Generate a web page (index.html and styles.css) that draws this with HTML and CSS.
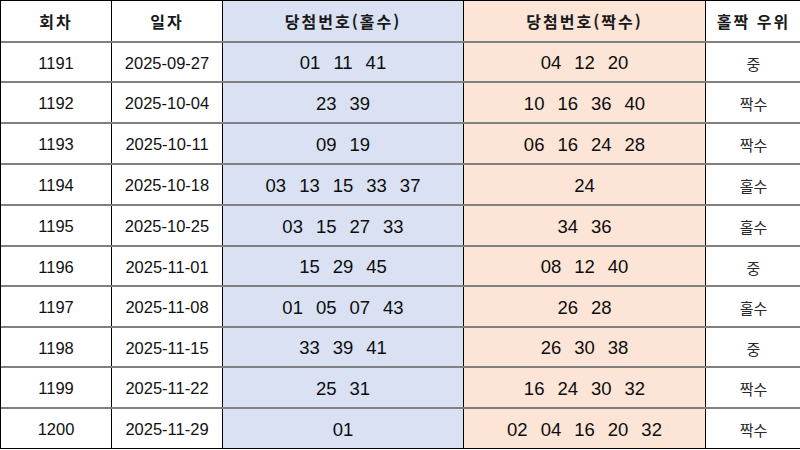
FILE: index.html
```html
<!DOCTYPE html>
<html lang="ko">
<head>
<meta charset="utf-8">
<link rel="stylesheet" href="styles.css">
</head>
<body>
<div class="table">
  <div class="row head h42">
    <div class="c c1">회차</div>
    <div class="c c2">일자</div>
    <div class="c c3 odd">당첨번호(홀수)</div>
    <div class="c c4 even">당첨번호(짝수)</div>
    <div class="c c5">홀짝 우위</div>
  </div>
  <div class="row h40">
    <div class="c c1 t">1191</div><div class="c c2 t">2025-09-27</div>
    <div class="c c3 odd n"><span>01</span><span>11</span><span>41</span></div>
    <div class="c c4 even n"><span>04</span><span>12</span><span>20</span></div>
    <div class="c c5 k">중</div>
  </div>
  <div class="row h41">
    <div class="c c1 t">1192</div><div class="c c2 t">2025-10-04</div>
    <div class="c c3 odd n"><span>23</span><span>39</span></div>
    <div class="c c4 even n"><span>10</span><span>16</span><span>36</span><span>40</span></div>
    <div class="c c5 k">짝수</div>
  </div>
  <div class="row h41">
    <div class="c c1 t">1193</div><div class="c c2 t">2025-10-11</div>
    <div class="c c3 odd n"><span>09</span><span>19</span></div>
    <div class="c c4 even n"><span>06</span><span>16</span><span>24</span><span>28</span></div>
    <div class="c c5 k">짝수</div>
  </div>
  <div class="row h41">
    <div class="c c1 t">1194</div><div class="c c2 t">2025-10-18</div>
    <div class="c c3 odd n"><span>03</span><span>13</span><span>15</span><span>33</span><span>37</span></div>
    <div class="c c4 even n"><span>24</span></div>
    <div class="c c5 k">홀수</div>
  </div>
  <div class="row h41">
    <div class="c c1 t">1195</div><div class="c c2 t">2025-10-25</div>
    <div class="c c3 odd n"><span>03</span><span>15</span><span>27</span><span>33</span></div>
    <div class="c c4 even n"><span>34</span><span>36</span></div>
    <div class="c c5 k">홀수</div>
  </div>
  <div class="row h40">
    <div class="c c1 t">1196</div><div class="c c2 t">2025-11-01</div>
    <div class="c c3 odd n"><span>15</span><span>29</span><span>45</span></div>
    <div class="c c4 even n"><span>08</span><span>12</span><span>40</span></div>
    <div class="c c5 k">중</div>
  </div>
  <div class="row h41">
    <div class="c c1 t">1197</div><div class="c c2 t">2025-11-08</div>
    <div class="c c3 odd n"><span>01</span><span>05</span><span>07</span><span>43</span></div>
    <div class="c c4 even n"><span>26</span><span>28</span></div>
    <div class="c c5 k">홀수</div>
  </div>
  <div class="row h40">
    <div class="c c1 t">1198</div><div class="c c2 t">2025-11-15</div>
    <div class="c c3 odd n"><span>33</span><span>39</span><span>41</span></div>
    <div class="c c4 even n"><span>26</span><span>30</span><span>38</span></div>
    <div class="c c5 k">중</div>
  </div>
  <div class="row h41">
    <div class="c c1 t">1199</div><div class="c c2 t">2025-11-22</div>
    <div class="c c3 odd n"><span>25</span><span>31</span></div>
    <div class="c c4 even n"><span>16</span><span>24</span><span>30</span><span>32</span></div>
    <div class="c c5 k">짝수</div>
  </div>
  <div class="row h40 last">
    <div class="c c1 t">1200</div><div class="c c2 t">2025-11-29</div>
    <div class="c c3 odd n"><span>01</span></div>
    <div class="c c4 even n"><span>02</span><span>04</span><span>16</span><span>20</span><span>32</span></div>
    <div class="c c5 k">짝수</div>
  </div>
</div>
</body>
</html>
```
FILE: styles.css
```css
html, body {
  margin: 0;
  padding: 0;
  background: #ffffff;
  width: 800px;
  height: 450px;
  overflow: hidden;
}
.table {
  width: 802px;
  border-top: 1px solid #000;
  border-left: 1px solid #000;
  box-sizing: border-box;
  font-family: "Liberation Sans", Arial, sans-serif;
  color: #111;
}
.row {
  display: flex;
  box-sizing: border-box;
  border-bottom: 2px solid #808080;
}
.row.last { border-bottom: 1px solid #000; }
.h42 { height: 42px; }
.h41 { height: 41px; }
.h40 { height: 40px; }
.c {
  display: flex;
  align-items: center;
  justify-content: center;
  box-sizing: border-box;
  border-right: 1px solid #000;
}
.c1 { width: 111px; }
.c2 { width: 111px; }
.c3 { width: 241px; }
.c4 { width: 242px; }
.c5 { width: 96px; }
.odd { background: #d9e1f2; }
.even { background: #fce4d6; }
.head .c {
  font-family: "Noto Sans CJK KR", sans-serif;
  font-weight: 700;
  font-size: 16px;
  letter-spacing: 2px;
  color: #1a1a1a;
}
.row:not(.head) .c { padding-top: 2px; }
.t {
  font-size: 16.5px;
}
.n {
  font-size: 18.5px;
  gap: 13px;
  color: #0d0d0d;
}
.k {
  font-family: "Noto Sans CJK KR", sans-serif;
  font-weight: 400;
  font-size: 15px;
  color: #2a2a2a;
}
```
